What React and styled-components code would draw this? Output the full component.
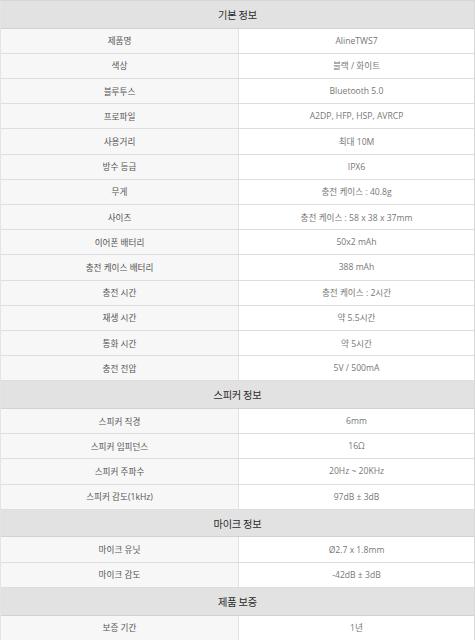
import React from 'react';
import styled, { createGlobalStyle } from 'styled-components';

const GlobalStyle = createGlobalStyle`
  html, body {
    margin: 0;
    padding: 0;
    background: #fff;
  }
  body {
    font-family: "Open Sans", "Noto Sans CJK KR", sans-serif;
  }
`;

const sections = [
  {
    title: '기본 정보',
    rows: [
      ['제품명', 'AlineTWS7'],
      ['색상', '블랙 / 화이트'],
      ['블루투스', 'Bluetooth 5.0'],
      ['프로파일', 'A2DP, HFP, HSP, AVRCP'],
      ['사용거리', '최대 10M'],
      ['방수 등급', 'IPX6'],
      ['무게', '충전 케이스 : 40.8g'],
      ['사이즈', '충전 케이스 : 58 x 38 x 37mm'],
      ['이어폰 배터리', '50x2 mAh'],
      ['충전 케이스 배터리', '388 mAh'],
      ['충전 시간', '충전 케이스 : 2시간'],
      ['재생 시간', '약 5.5시간'],
      ['통화 시간', '약 5시간'],
      ['충전 전압', '5V / 500mA'],
    ],
  },
  {
    title: '스피커 정보',
    rows: [
      ['스피커 직경', '6mm'],
      ['스피커 임피던스', '16Ω'],
      ['스피커 주파수', '20Hz ~ 20KHz'],
      ['스피커 감도(1kHz)', '97dB ± 3dB'],
    ],
  },
  {
    title: '마이크 정보',
    rows: [
      ['마이크 유닛', 'Ø2.7 x 1.8mm'],
      ['마이크 감도', '-42dB ± 3dB'],
    ],
  },
  {
    title: '제품 보증',
    rows: [['보증 기간', '1년']],
  },
];

const SpecTable = styled.div`
  width: 475px;
  box-sizing: border-box;
  border-left: 1px solid #e4e4e4;
  border-right: 1px solid #d9d9d9;
  border-top: 1px solid #d6d6d6;
`;

const SectionHead = styled.div`
  height: 27.7px;
  box-sizing: border-box;
  display: flex;
  align-items: center;
  justify-content: center;
  background: #e2e2e2;
  border-bottom: 1px solid #d2d2d2;
  color: #2a2a2a;
  font-size: 10.2px;
  font-family: "Noto Sans CJK KR", sans-serif;
  letter-spacing: -0.2px;
`;

const Row = styled.div`
  display: grid;
  grid-template-columns: 238px 1fr;
  height: 25.2px;
  box-sizing: border-box;
  border-bottom: 1px solid #dedede;
`;

const Cell = styled.div`
  display: flex;
  align-items: center;
  justify-content: center;
  font-size: 8.6px;
  color: ${(p) => (p.$label ? '#555' : '#777')};
  background: ${(p) => (p.$label ? '#f7f7f7' : '#ffffff')};
  border-right: ${(p) => (p.$label ? '1px solid #e2e2e2' : 'none')};
  white-space: nowrap;
`;

export default function App() {
  return (
    <>
      <GlobalStyle />
      <SpecTable>
        {sections.map((section) => (
          <React.Fragment key={section.title}>
            <SectionHead>{section.title}</SectionHead>
            {section.rows.map(([label, value]) => (
              <Row key={label}>
                <Cell $label>{label}</Cell>
                <Cell>{value}</Cell>
              </Row>
            ))}
          </React.Fragment>
        ))}
      </SpecTable>
    </>
  );
}
